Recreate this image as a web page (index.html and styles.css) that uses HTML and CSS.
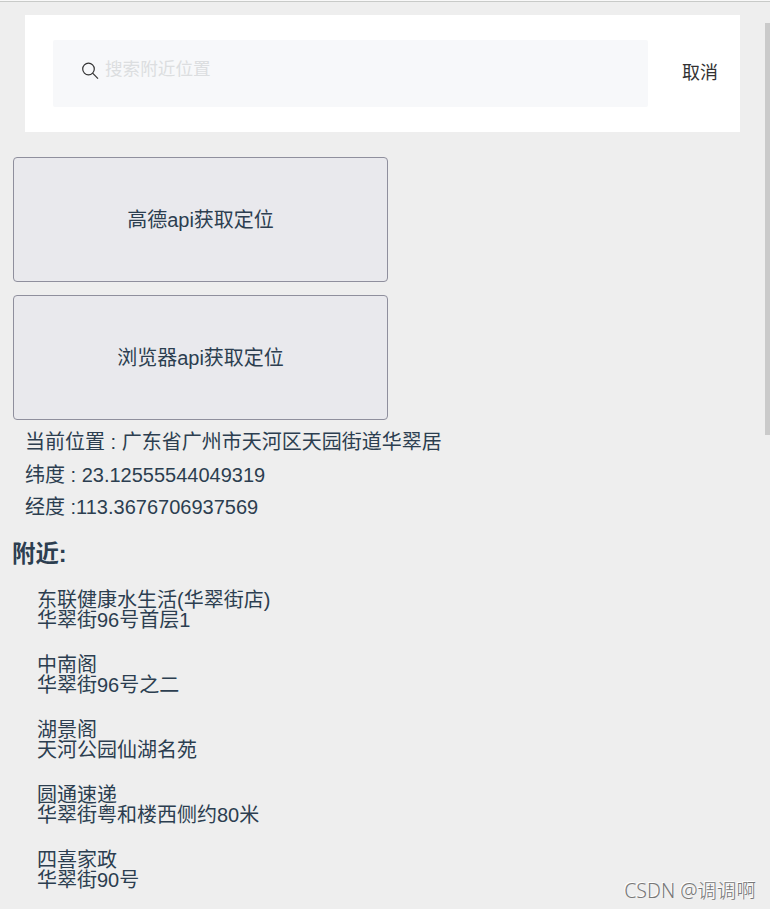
FILE: index.html
```
<!DOCTYPE html>
<html lang="zh-CN">
<head>
    <meta charset="UTF-8">
    <meta name="viewport" content="width=device-width, initial-scale=1.0">
    <title>定位</title>
    <link rel="stylesheet" href="styles.css">
</head>
<body>

    <div id="app">
        <div class="search">
            <div class="search-box">
                <svg class="search-icon" width="18" height="18" viewBox="0 0 18 18">
                    <circle cx="7.5" cy="7" r="5.8" />
                    <path d="M11.6 11.2 L17 16.6" />
                </svg>
                <span class="placeholder">搜索附近位置</span>
            </div>
            <div class="cancel">取消</div>
        </div>

        <div class="btn">高德api获取定位</div>
        <div class="btn">浏览器api获取定位</div>

        <div class="info">
            <p>当前位置 : 广东省广州市天河区天园街道华翠居</p>
            <p>纬度 : 23.12555544049319</p>
            <p>经度 :113.3676706937569</p>
        </div>

        <h3>附近:</h3>
        <ul class="list">
            <li>
                <div>东联健康水生活(华翠街店)</div>
                <div>华翠街96号首层1</div>
            </li>
            <li>
                <div>中南阁</div>
                <div>华翠街96号之二</div>
            </li>
            <li>
                <div>湖景阁</div>
                <div>天河公园仙湖名苑</div>
            </li>
            <li>
                <div>圆通速递</div>
                <div>华翠街粤和楼西侧约80米</div>
            </li>
            <li>
                <div>四喜家政</div>
                <div>华翠街90号</div>
            </li>
        </ul>
    </div>

    <div class="scrollbar"></div>
    <div class="watermark">CSDN @调调啊</div>

</body>
</html>
```
FILE: styles.css
```
* {
    box-sizing: border-box;
}
body {
    margin: 0;
    height: 909px;
    position: relative;
    overflow: hidden;
    background-color: #eee;
    font-family: "Liberation Sans", "Noto Sans CJK SC", sans-serif;
    font-size: 20px;
    line-height: 20px;
    color: #2c3e50;
}
#app {
    height: 909px;
    border-top: 1px solid #f8f8f8;
    box-shadow: inset 0 1px 0 #c8cac8;
    padding: 14px 30px 0 13px;
}
.search {
    display: flex;
    align-items: center;
    height: 117px;
    margin: 0 0 25px 12px;
    padding-left: 28px;
    background-color: #fff;
}
.search-box {
    display: flex;
    width: 595px;
    height: 67px;
    padding: 19px 28px;
    border-radius: 2px;
    background-color: #f7f8fa;
    font-size: 17.6px;
}
.search-icon {
    margin: 3px 6px 0 0;
    fill: none;
    stroke: #333;
    stroke-width: 1.2;
}
.placeholder {
    color: #dcdee0;
}
.cancel {
    margin-left: 34px;
    padding-bottom: 2px;
    font-size: 18px;
    color: #323233;
}
.btn {
    display: flex;
    align-items: center;
    justify-content: center;
    width: 375px;
    height: 125px;
    margin-bottom: 13px;
    border: 1px solid #8f8f9d;
    border-radius: 4px;
    background-color: #e9e9ed;
}
.info {
    margin: -7px 0 0 12px;
}
.info p {
    margin: 0;
    height: 32.5px;
    line-height: 32.5px;
}
h3 {
    margin: 17px 0 23px -1px;
    font-size: 23.4px;
    line-height: 26px;
}
.list {
    list-style: none;
    margin: 0;
    padding: 0 0 0 24px;
}
.list li {
    margin-bottom: 25px;
}
.scrollbar {
    position: absolute;
    top: 23px;
    right: 0;
    width: 5px;
    height: 412px;
    background-color: #cacaca;
}
.watermark {
    position: absolute;
    right: 14px;
    bottom: 8px;
    font-family: "Noto Sans", "Noto Sans CJK SC", sans-serif;
    font-size: 19.5px;
    font-weight: 300;
    color: #777;
    text-shadow: -1px -1px 0 #fff;
}
```
